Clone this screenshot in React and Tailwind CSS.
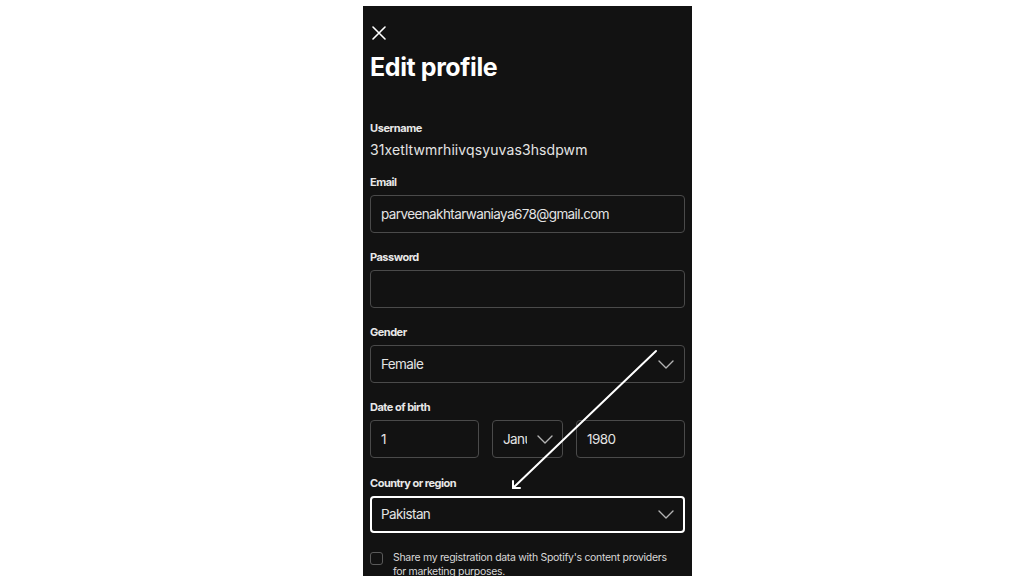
import React from "react";

// Chevron of the select boxes
const Chevron = ({ className = "" }) => (
  <svg className={className} width="16" height="9" viewBox="0 0 16 9" fill="none">
    <path d="M1 1l7 7 7-7" stroke="#b3b3b3" strokeWidth="1.4" strokeLinecap="round" strokeLinejoin="round" />
  </svg>
);

const Label = ({ children }) => (
  <div className="text-[11px] leading-4 font-bold text-[#e8e8e8] tracking-[-0.5px] mb-[5px]">{children}</div>
);

const boxClass =
  "h-[38px] rounded-[4px] border border-[#4a4a4a] bg-[#121212] flex items-center px-[10px] text-[13.5px] tracking-[-0.6px] text-[#e4e4e4]";

export default function App() {
  return (
    <div className="w-full h-[582px] bg-white flex" style={{ fontFamily: "Inter, 'Noto Sans', sans-serif" }}>
      <div className="relative w-[329px] h-[570px] mt-[6px] ml-[363px] bg-[#121212] overflow-hidden px-[7px] flex flex-col">
        {/* close */}
        <div className="mt-[20px] h-[14px] w-[14px] ml-[2px]">
          <svg width="14" height="14" viewBox="0 0 14 14" fill="none">
            <path d="M1 1l12 12M13 1L1 13" stroke="#ffffff" strokeWidth="1.6" strokeLinecap="round" />
          </svg>
        </div>
        <h1 className="mt-[11px] text-[25px] leading-8 font-bold text-white tracking-[-0.4px]">Edit profile</h1>

        <div className="mt-[37px]">
          <div className="text-[11px] leading-4 font-bold text-[#e8e8e8] tracking-[-0.4px]">Username</div>
          <div className="mt-[4px] text-[14px] leading-5 text-[#e4e4e4] tracking-[0.1px]">31xetltwmrhiivqsyuvas3hsdpwm</div>
        </div>

        <div className="mt-[14px]">
          <Label>Email</Label>
          <div className={boxClass}>parveenakhtarwaniaya678@gmail.com</div>
        </div>

        <div className="mt-[16px]">
          <Label>Password</Label>
          <div className={boxClass + " border-[#2e2e2e]"}></div>
        </div>

        <div className="mt-[16px]">
          <Label>Gender</Label>
          <div className={boxClass + " justify-between"}>
            <span>Female</span>
            <Chevron />
          </div>
        </div>

        <div className="mt-[16px]">
          <Label>Date of birth</Label>
          <div className="flex gap-[13px]">
            <div className={boxClass + " w-[109px]"}>1</div>
            <div className={boxClass + " w-[71px] justify-between pr-[9px]"}>
              <span className="w-[24px] overflow-hidden whitespace-nowrap">January</span>
              <Chevron />
            </div>
            <div className={boxClass + " flex-1"}>1980</div>
          </div>
        </div>

        <div className="mt-[17px]">
          <Label>Country or region</Label>
          <div className="h-[37px] rounded-[4px] border-2 border-white bg-[#121212] flex items-center justify-between px-[9px] text-[13.5px] tracking-[-0.6px] text-[#e4e4e4]">
            <span>Pakistan</span>
            <Chevron />
          </div>
        </div>

        <div className="mt-[19px] flex gap-[10px]">
          <div className="w-[13px] h-[13px] shrink-0 rounded-[3px] border border-[#5a5a5a]"></div>
          <div className="max-w-[280px] text-[10.5px] leading-[14px] text-[#d8d8d8] tracking-[-0.3px] -mt-[1px]">
            Share my registration data with Spotify's content providers for marketing purposes.
          </div>
        </div>

        {/* annotation arrow */}
        <svg className="absolute left-0 top-0 pointer-events-none" width="329" height="570" viewBox="0 0 329 570">
          <path d="M293 345L150 482" stroke="#ffffff" strokeWidth="2" strokeLinecap="round" />
          <path d="M150 475L150 482L157 482" stroke="#ffffff" strokeWidth="2" strokeLinecap="round" strokeLinejoin="round" fill="none" />
        </svg>
      </div>
    </div>
  );
}
